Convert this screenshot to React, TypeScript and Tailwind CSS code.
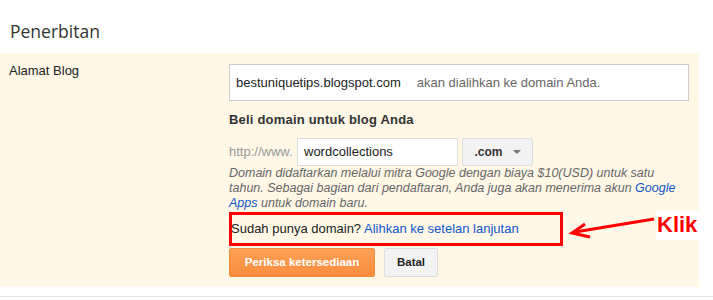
export default function App() {
  return (
    <div className="relative h-[300px] w-[713px] bg-white font-['Liberation_Sans',Arial,sans-serif] text-[13px] text-[#222]">
      <div className="h-[53px] pl-[10px] pt-[19px]">
        <h1 className="font-['Open_Sans',sans-serif] text-[17.5px] leading-[24px] text-[#333]">Penerbitan</h1>
      </div>

      <div className="flex w-[699px] bg-[#fff8e6] pb-[10px] pt-[11px]">
        <div className="w-[229px] pl-[9px] leading-[14px]">Alamat Blog</div>

        <div className="w-[460px]">
          <div className="flex h-[37px] items-center border border-[#ccc] bg-white px-[6px]">
            <span>bestuniquetips.blogspot.com</span>
            <span className="ml-[16px] text-[#666]">akan dialihkan ke domain Anda.</span>
          </div>

          <h2 className="mt-[11px] font-bold leading-[16px] tracking-[0.2px] text-[#333]">Beli domain untuk blog Anda</h2>

          <div className="mt-[10px] flex h-[28px] items-center">
            <span className="w-[68px] text-[#999]">http://www.</span>
            <div className="flex h-[28px] w-[161px] items-center border border-[#ddd] bg-white px-[6px]">wordcollections</div>
            <button className="ml-[4px] flex h-[28px] w-[71px] items-center justify-center gap-[10px] rounded-[2px] border border-[#ddd] bg-[#f3f3f3] text-[12px] font-bold text-[#333]">
              .com
              <span className="h-0 w-0 border-x-[4px] border-t-[4px] border-x-transparent border-t-[#777]" />
            </button>
          </div>

          <p className="text-[12.5px] italic leading-[15px] text-[#666]">
            Domain didaftarkan melalui mitra Google dengan biaya $10(USD) untuk satu tahun. Sebagai bagian dari pendaftaran, Anda juga akan menerima akun{" "}
            <a className="text-[#1155cc]">Google</a> <a className="text-[#1155cc]">Apps</a> untuk domain baru.
          </p>

          <div className="mt-[1px] flex h-[34px] w-[334px] items-center border-[3px] border-[#ff0000]">
            <span className="-ml-[1px]">
              Sudah punya domain? <a className="text-[#1155cc]">Alihkan ke setelan lanjutan</a>
            </span>
          </div>

          <div className="mt-[2px] flex gap-[9px]">
            <button className="h-[29px] w-[146px] rounded-[2px] border border-[#f48c3a] bg-gradient-to-b from-[#fda156] to-[#f98c3c] text-[11.5px] font-bold text-white">
              Periksa ketersediaan
            </button>
            <button className="h-[29px] w-[54px] rounded-[2px] border border-[#dcdcdc] bg-[#f3f3f3] text-[11.5px] font-bold text-[#222]">
              Batal
            </button>
          </div>
        </div>
      </div>

      <div className="mt-[9px] h-px w-full bg-[#e5e5e5]" />

      <svg className="absolute left-[565px] top-[212px]" width="95" height="32" viewBox="565 212 95 32">
        <path d="M654 219 L575 232" stroke="#ff0000" strokeWidth="3" fill="none" />
        <path d="M585 224 L572 233 L590 237" stroke="#ff0000" strokeWidth="3" fill="none" />
      </svg>

      <div className="absolute left-[656px] top-[210px] h-[30px] w-[43px] bg-white pl-[1px] text-[22px] font-bold leading-[30px] text-[#ff0000]">
        Klik
      </div>
    </div>
  );
}
